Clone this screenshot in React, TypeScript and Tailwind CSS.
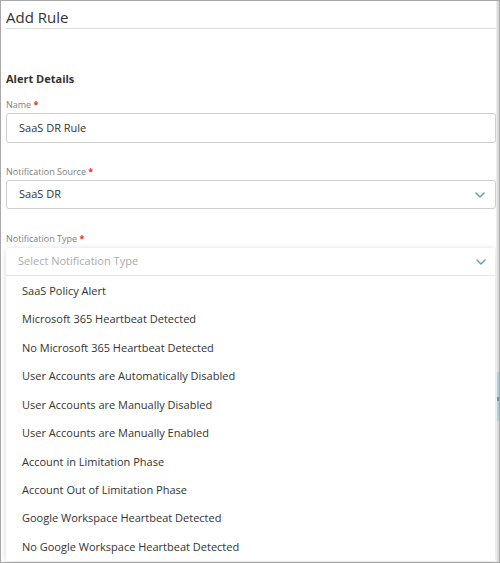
import React from 'react';

const types = [
  'SaaS Policy Alert',
  'Microsoft 365 Heartbeat Detected',
  'No Microsoft 365 Heartbeat Detected',
  'User Accounts are Automatically Disabled',
  'User Accounts are Manually Disabled',
  'User Accounts are Manually Enabled',
  'Account in Limitation Phase',
  'Account Out of Limitation Phase',
  'Google Workspace Heartbeat Detected',
  'No Google Workspace Heartbeat Detected',
];

const Chevron = () => (
  <svg width="10" height="6" viewBox="0 0 10 6" fill="none">
    <polyline points="1,1 5,5 9,1" stroke="#5b9db2" strokeWidth="1.4" strokeLinecap="round" strokeLinejoin="round" />
  </svg>
);

const Label = ({ text, className = '' }: { text: string; className?: string }) => (
  <div className={`text-[9px] leading-[14px] text-[#808080] ${className}`}>
    {text} <span className="text-[#e0322f] font-bold">*</span>
  </div>
);

export default function App() {
  return (
    <div
      className="w-[500px] h-[563px] overflow-hidden border border-[#a8a8a8] bg-white flex text-[#333]"
      style={{ fontFamily: '"Open Sans", "Noto Sans", sans-serif' }}
    >
      <div className="flex-1 flex flex-col pl-[5px]">
        {/* Header */}
        <div className="pt-[6px] border-b border-[#d9d9d9]">
          <h1 className="text-[15px] leading-[21px] text-[#333]">Add Rule</h1>
        </div>

        <div className="flex flex-col">
          <h2 className="mt-[42px] text-[11px] leading-[16px] font-bold text-[#333]">Alert Details</h2>

          <Label text="Name" className="mt-[11px]" />
          <div className="mt-[1px] h-[30px] border border-[#cfcfcf] rounded-[3px] flex items-center pl-[12px] text-[11px]">
            SaaS DR Rule
          </div>

          <Label text="Notification Source" className="mt-[22px]" />
          <div className="mt-[1px] h-[29px] border border-[#cfcfcf] rounded-[3px] flex items-center justify-between pl-[12px] pr-[10px] text-[11px]">
            <span>SaaS DR</span>
            <Chevron />
          </div>

          <Label text="Notification Type" className="mt-[23px]" />

          {/* Open select with dropdown */}
          <div className="mt-[2px] mr-[1px] shadow-[0_1px_6px_rgba(0,0,0,0.16)] rounded-t-[3px] bg-white">
            <div className="h-[28px] border-b border-[#e6e6e6] flex items-center justify-between pl-[12px] pr-[9px] text-[11px] text-[#ababab]">
              <span>Select Notification Type</span>
              <Chevron />
            </div>
            <ul className="pt-[1px]">
              {types.map((t) => (
                <li key={t} className="h-[28.45px] flex items-center pl-[16px] text-[11px] text-[#333]">
                  {t}
                </li>
              ))}
            </ul>
          </div>
        </div>
      </div>

      {/* Edge of the page behind */}
      <div className="w-[3px] flex flex-col border-l border-[#ececec]">
        <div className="h-[371px] bg-[#dcdcdc]" />
        <div className="h-[25px] bg-[#a9d2de]" />
        <div className="h-[4px] bg-[#5f9fb1]" />
        <div className="h-[20px] bg-[#a9d2de]" />
        <div className="flex-1 bg-[#dcdcdc]" />
      </div>
    </div>
  );
}
